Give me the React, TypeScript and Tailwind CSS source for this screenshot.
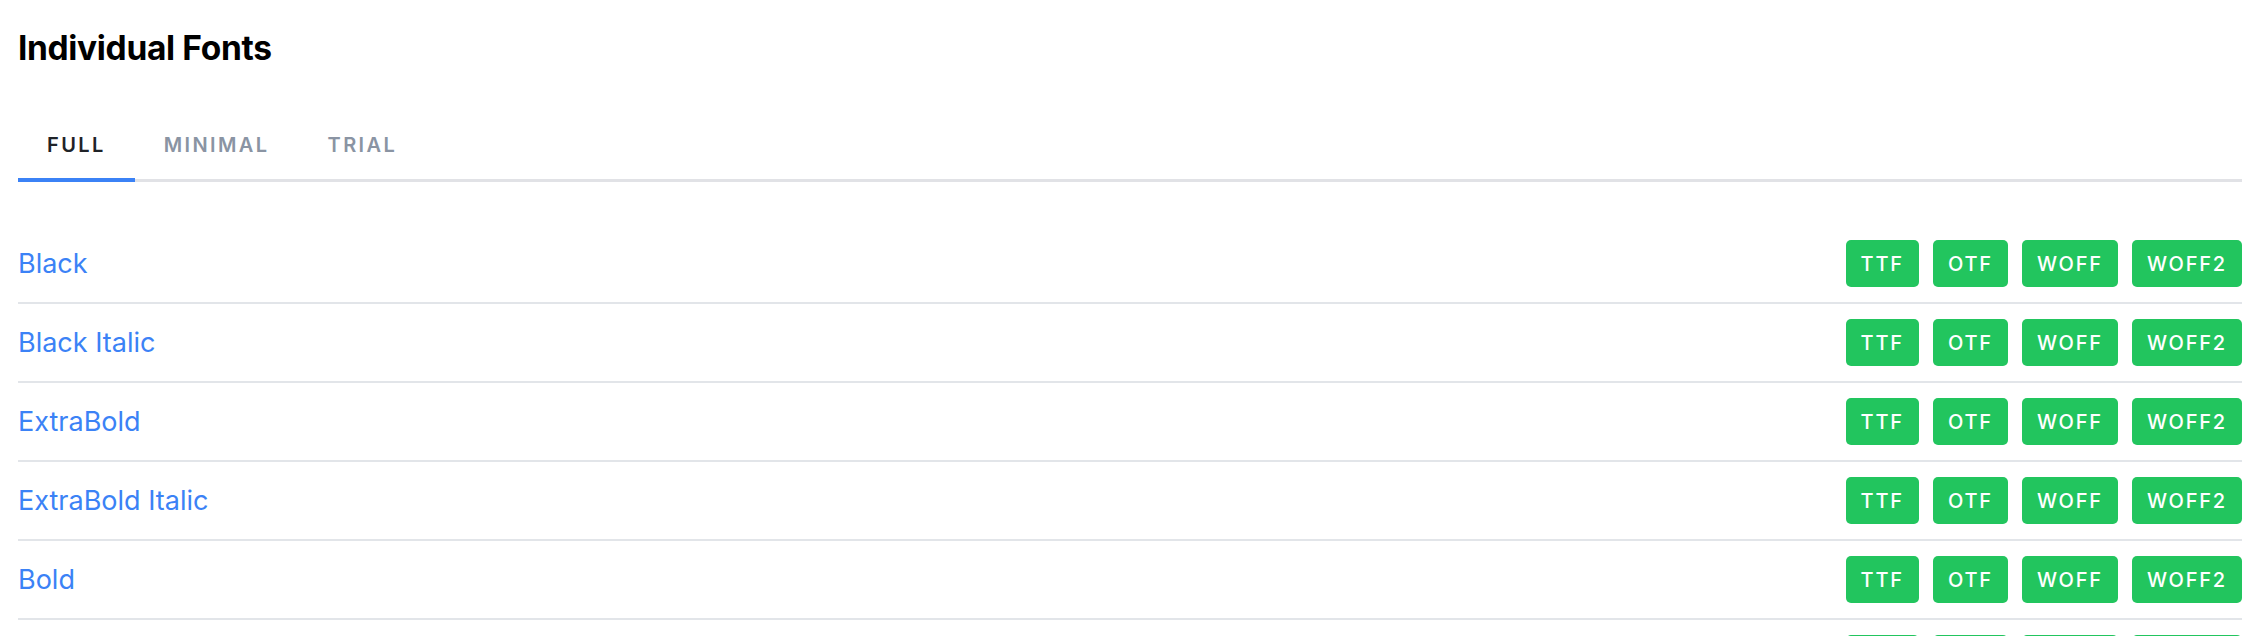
import React from "react";

const rows = ["Black", "Black Italic", "ExtraBold", "ExtraBold Italic", "Bold", "Bold Italic"];
const formats = ["TTF", "OTF", "WOFF", "WOFF2"];

export default function App() {
  return (
    <div className="h-[636px] bg-white pl-[18px] pr-[26px] pt-[28px] overflow-hidden" style={{ fontFamily: "Inter, 'Noto Sans', sans-serif" }}>
      <h2 className="text-[33.5px] leading-[40px] font-bold text-black tracking-[-0.01em]">Individual Fonts</h2>
      <div className="mt-[65px] flex border-b-[3px] border-[#e1e2e6]">
        {["FULL", "MINIMAL", "TRIAL"].map((t, i) => (
          <div
            key={t}
            className={
              "px-[29px] pb-[21px] -mb-[3px] text-[20px] leading-[24px] font-semibold tracking-[0.12em] " +
              (i === 0 ? "text-[#1f2328] border-b-[4px] border-[#3b82f6]" : "text-[#8a94a3] border-b-[4px] border-transparent")
            }
          >
            {t}
          </div>
        ))}
      </div>
      <div className="mt-[43px]">
        {rows.map((r) => (
          <div key={r} className="flex items-center justify-between py-[15px] border-b-2 border-[#e2e5e9]">
            <a className="text-[27px] leading-[32px] text-[#3b82f6]">{r}</a>
            <div className="flex gap-[14px]">
              {formats.map((f) => (
                <span
                  key={f}
                  className="h-[47px] px-[15px] flex items-center justify-center rounded-[5px] bg-[#22c55e] text-white text-[20px] font-medium tracking-[0.09em]"
                >
                  {f}
                </span>
              ))}
            </div>
          </div>
        ))}
      </div>
    </div>
  );
}
